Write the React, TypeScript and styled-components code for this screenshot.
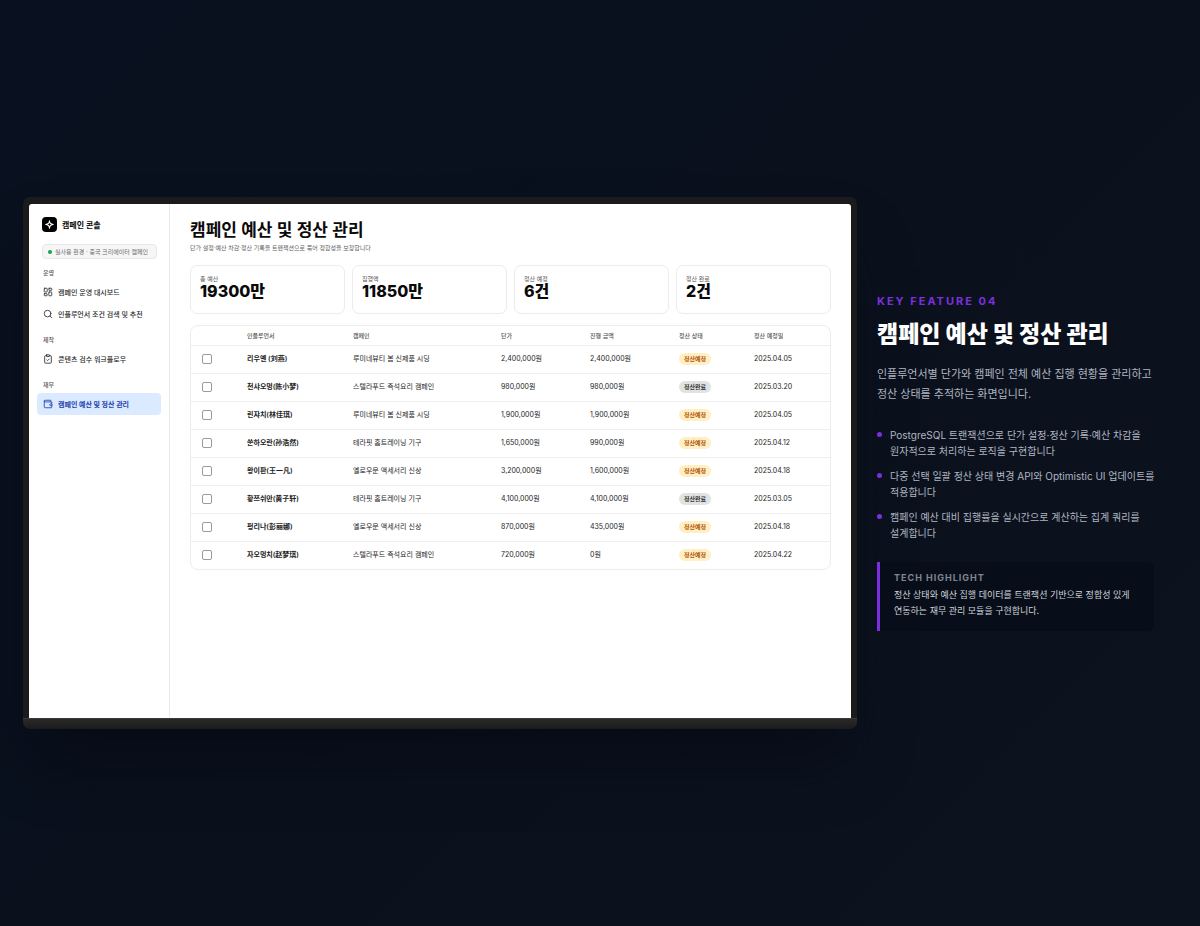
import React from "react";
import styled, { createGlobalStyle } from "styled-components";
import { LayoutDashboard, Search, ClipboardCheck, Wallet, type LucideIcon } from "lucide-react";

const GlobalStyle = createGlobalStyle`
  *, *::before, *::after { box-sizing: border-box; }
  body {
    margin: 0;
    background: #0b111e;
    font-family: Inter, "Noto Sans CJK KR", "Noto Sans CJK SC", sans-serif;
  }
  h1, h2, p, ul, dl, dd { margin: 0; padding: 0; }
`;

const Page = styled.div`
  min-height: 100vh;
  display: grid;
  grid-template-columns: minmax(0, 834fr) minmax(0, 277fr);
  gap: 20px;
  align-items: center;
  padding: 0 46px 0 23px;
  background: linear-gradient(135deg, #09101f 0%, #0a111d 50%, #0c131f 100%);
`;

const Device = styled.div`
  border-radius: 7px;
  box-shadow: 0 40px 60px -10px rgba(0, 2, 12, 0.4);
`;

const Bezel = styled.div`
  padding: 7px 6px 0;
  border-radius: 7px 7px 0 0;
  background: #1b1b1b;
`;

const Base = styled.div`
  height: 11px;
  border-top: 1px solid #3a3a3a;
  border-radius: 0 0 7px 7px;
  background: linear-gradient(#2a2a2a, #1b1b1b);
`;

const Screen = styled.div`
  display: flex;
  aspect-ratio: 16 / 10;
  overflow: hidden;
  border-radius: 3px 3px 0 0;
  background: #fff;
  color: #0a0a0a;
`;

const Sidebar = styled.aside`
  flex: 0 0 141px;
  padding: 13px 8px;
  border-right: 1px solid #ebebeb;
`;

const Brand = styled.div`
  display: flex;
  align-items: center;
  gap: 5px;
  padding: 0 5px;
  font-size: 8px;
  line-height: 14px;
  font-weight: 700;
`;

const Logo = styled.span`
  display: grid;
  place-items: center;
  width: 15px;
  height: 15px;
  border-radius: 4px;
  background: #000;
`;

const EnvPill = styled.p`
  && { margin: 12px 4px 8px 5px; padding: 0 5px; }
  display: flex;
  align-items: center;
  gap: 3px;
  height: 15px;
  border: 1px solid #e8e8e8;
  border-radius: 4px;
  background: #f6f6f6;
  color: #6b6b6b;
  font-size: 6px;
  white-space: nowrap;
`;

const LiveDot = styled.i`
  width: 4px;
  height: 4px;
  border-radius: 50%;
  background: #16a34a;
`;

const NavGroup = styled.section`
  margin-bottom: 9px;
`;

const NavTitle = styled.h2`
  && { margin-bottom: 2px; padding: 0 6px; }
  color: #555;
  font-size: 6px;
  line-height: 12px;
  font-weight: 500;
`;

const NavLink = styled.a<{ $active?: boolean }>`
  display: flex;
  align-items: center;
  gap: 5px;
  height: 22px;
  padding: 0 6px;
  border-radius: 4px;
  font-size: 7px;
  font-weight: ${(p) => (p.$active ? 700 : 500)};
  color: ${(p) => (p.$active ? "#1e40af" : "#2b2b2b")};
  background: ${(p) => (p.$active ? "#dbeafe" : "transparent")};
  text-decoration: none;
  white-space: nowrap;
`;

const Main = styled.main`
  flex: 1;
  min-width: 0;
  padding: 15px 20px;
`;

const ScreenTitle = styled.h1`
  font-size: 17px;
  line-height: 22px;
  font-weight: 600;
`;

const Subtitle = styled.p`
  color: #5c5c5c;
  font-size: 6px;
  line-height: 14px;
`;

const Stats = styled.dl`
  display: grid;
  grid-template-columns: repeat(4, 1fr);
  gap: 7px;
  && { padding: 10px 0 11px; }
`;

const Stat = styled.div`
  height: 49px;
  padding: 8px 9px;
  border: 1px solid #ececec;
  border-radius: 7px;
`;

const StatLabel = styled.dt`
  color: #555;
  font-size: 6px;
  line-height: 9px;
`;

const StatValue = styled.dd`
  font-size: 16px;
  line-height: 17px;
  font-weight: 800;
`;

const TableCard = styled.div`
  overflow: hidden;
  border: 1px solid #ececec;
  border-radius: 8px;
`;

const Table = styled.table`
  width: 100%;
  table-layout: fixed;
  border-collapse: collapse;
  font-size: 7px;
  white-space: nowrap;
`;

const HeadCell = styled.th<{ $width?: number }>`
  width: ${(p) => (p.$width ? `${p.$width}px` : "auto")};
  height: 19px;
  padding: 0 8px;
  color: #555;
  font-size: 6px;
  font-weight: 500;
  text-align: left;
`;

const Row = styled.tr`
  height: 28px;
  border-top: 1px solid #efefef;
`;

const Cell = styled.td<{ $strong?: boolean }>`
  padding: 0 8px;
  color: #1c1c1c;
  font-weight: ${(p) => (p.$strong ? 600 : 400)};
  line-height: 12px;
  vertical-align: middle;
`;

const CheckCell = styled(Cell)`
  padding: 0 11px;
`;

const Check = styled.input`
  appearance: none;
  display: block;
  width: 10px;
  height: 10px;
  margin: 0;
  border: 1px solid #9a9a9a;
  border-radius: 2px;
  background: #fff;

  &:checked { background: #1e40af; }
`;

const Badge = styled.span<{ $done: boolean }>`
  display: block;
  width: max-content;
  padding: 0 5px;
  border-radius: 6px;
  font-size: 6px;
  line-height: 12px;
  font-weight: 600;
  color: ${(p) => (p.$done ? "#333" : "#b45309")};
  background: ${(p) => (p.$done ? "#e2e2e2" : "#fef0c3")};
`;

const Story = styled.article`
  color: #b0b5c0;
  white-space: nowrap;
`;

const Eyebrow = styled.p`
  color: #7c2fdf;
  font-size: 11px;
  line-height: 12px;
  font-weight: 700;
  letter-spacing: 2px;
`;

const StoryTitle = styled.h2`
  && { margin: 12px 0 15px; }
  color: #fff;
  font-size: 23px;
  line-height: 30px;
  font-weight: 800;
`;

const Lead = styled.p`
  font-size: 11px;
  line-height: 20px;
`;

const Points = styled.ul`
  && { margin: 23px 0 21px; }
  display: grid;
  gap: 9px;
  list-style: none;
  font-size: 10px;
  line-height: 16px;
`;

const Point = styled.li`
  display: flex;
  gap: 8px;

  &::before {
    content: "";
    flex: none;
    width: 5px;
    height: 5px;
    margin-top: 5px;
    border-radius: 50%;
    background: #7c2fdf;
  }
`;

const Highlight = styled.section`
  padding: 10px 14px 12px;
  border-left: 3px solid #7c2fdf;
  border-radius: 0 6px 6px 0;
  background: #080e19;
`;

const HighlightTitle = styled.h2`
  && { margin-bottom: 3px; }
  color: #80858f;
  font-size: 9px;
  line-height: 12px;
  font-weight: 700;
  letter-spacing: 1px;
`;

const HighlightText = styled.p`
  color: #ced2da;
  font-size: 9px;
  line-height: 16px;
`;

type NavItem = { label: string; Icon: LucideIcon; active?: boolean };

const nav: { title: string; items: NavItem[] }[] = [
  {
    title: "운영",
    items: [
      { label: "캠페인 운영 대시보드", Icon: LayoutDashboard },
      { label: "인플루언서 조건 검색 및 추천", Icon: Search },
    ],
  },
  { title: "제작", items: [{ label: "콘텐츠 검수 워크플로우", Icon: ClipboardCheck }] },
  { title: "재무", items: [{ label: "캠페인 예산 및 정산 관리", Icon: Wallet, active: true }] },
];

const stats = [
  ["총 예산", "19300만"],
  ["집행액", "11850만"],
  ["정산 예정", "6건"],
  ["정산 완료", "2건"],
];

const columns: [string, number?][] = [
  ["인플루언서", 106],
  ["캠페인", 148],
  ["단가", 89],
  ["진행 금액", 89],
  ["정산 상태", 75],
  ["정산 예정일"],
];

const rows = [
  ["리우옌 (刘燕)", "루미네뷰티 봄 신제품 시딩", "2,400,000원", "2,400,000원", "정산예정", "2025.04.05"],
  ["천샤오멍(陈小梦)", "스텔라푸드 즉석요리 캠페인", "980,000원", "980,000원", "정산완료", "2025.03.20"],
  ["린쟈치(林佳琪)", "루미네뷰티 봄 신제품 시딩", "1,900,000원", "1,900,000원", "정산예정", "2025.04.05"],
  ["쑨하오란(孙浩然)", "테라핏 홈트레이닝 기구", "1,650,000원", "990,000원", "정산예정", "2025.04.12"],
  ["왕이판(王一凡)", "옐로우문 액세서리 신상", "3,200,000원", "1,600,000원", "정산예정", "2025.04.18"],
  ["황쯔쉬안(黄子轩)", "테라핏 홈트레이닝 기구", "4,100,000원", "4,100,000원", "정산완료", "2025.03.05"],
  ["펑리나(彭丽娜)", "옐로우문 액세서리 신상", "870,000원", "435,000원", "정산예정", "2025.04.18"],
  ["자오멍치(赵梦琪)", "스텔라푸드 즉석요리 캠페인", "720,000원", "0원", "정산예정", "2025.04.22"],
];

const points = [
  ["PostgreSQL 트랜잭션으로 단가 설정·정산 기록·예산 차감을", "원자적으로 처리하는 로직을 구현합니다"],
  ["다중 선택 일괄 정산 상태 변경 API와 Optimistic UI 업데이트를", "적용합니다"],
  ["캠페인 예산 대비 집행률을 실시간으로 계산하는 집계 쿼리를", "설계합니다"],
];

export default function App() {
  return (
    <>
      <GlobalStyle />
      <Page>
        <Device>
          <Bezel>
            <Screen>
              <Sidebar>
                <Brand>
                  <Logo>
                    <svg width="9" height="9" viewBox="0 0 24 24" fill="none" stroke="#fff" strokeWidth="3" strokeLinejoin="round">
                      <path d="M12 2C12.500 7 14 9 15 9.500C17 11 19 11.700 22 12C19 12.300 17 13 15 14.500C14 15.500 12.500 17 12 22C11.500 17 10 15.500 9 14.500C7 13 5 12.300 2 12C5 11.700 7 11 9 9.500C10 9 11.500 7 12 2Z" />
                    </svg>
                  </Logo>
                  캠페인 콘솔
                </Brand>
                <EnvPill>
                  <LiveDot />
                  실사용 환경 · 중국 크리에이터 캠페인
                </EnvPill>
                <nav>
                  {nav.map((group) => (
                    <NavGroup key={group.title}>
                      <NavTitle>{group.title}</NavTitle>
                      {group.items.map(({ label, Icon, active }) => (
                        <NavLink key={label} href="#" $active={active}>
                          <Icon size={10} strokeWidth={2} />
                          {label}
                        </NavLink>
                      ))}
                    </NavGroup>
                  ))}
                </nav>
              </Sidebar>
              <Main>
                <ScreenTitle>캠페인 예산 및 정산 관리</ScreenTitle>
                <Subtitle>단가 설정·예산 차감·정산 기록을 트랜잭션으로 묶어 정합성을 보장합니다</Subtitle>
                <Stats>
                  {stats.map(([label, value]) => (
                    <Stat key={label}>
                      <StatLabel>{label}</StatLabel>
                      <StatValue>{value}</StatValue>
                    </Stat>
                  ))}
                </Stats>
                <TableCard>
                  <Table>
                    <thead>
                      <tr>
                        <HeadCell $width={48} aria-label="선택" />
                        {columns.map(([label, width]) => (
                          <HeadCell key={label} $width={width}>{label}</HeadCell>
                        ))}
                      </tr>
                    </thead>
                    <tbody>
                      {rows.map(([name, campaign, price, spent, status, date]) => (
                        <Row key={name}>
                          <CheckCell>
                            <Check type="checkbox" aria-label={name} />
                          </CheckCell>
                          <Cell $strong>{name}</Cell>
                          <Cell>{campaign}</Cell>
                          <Cell>{price}</Cell>
                          <Cell>{spent}</Cell>
                          <Cell>
                            <Badge $done={status === "정산완료"}>{status}</Badge>
                          </Cell>
                          <Cell>{date}</Cell>
                        </Row>
                      ))}
                    </tbody>
                  </Table>
                </TableCard>
              </Main>
            </Screen>
          </Bezel>
          <Base />
        </Device>
        <Story>
          <Eyebrow>KEY FEATURE 04</Eyebrow>
          <StoryTitle>캠페인 예산 및 정산 관리</StoryTitle>
          <Lead>
            인플루언서별 단가와 캠페인 전체 예산 집행 현황을 관리하고
            <br />
            정산 상태를 추적하는 화면입니다.
          </Lead>
          <Points>
            {points.map(([first, second]) => (
              <Point key={first}>
                <span>
                  {first}
                  <br />
                  {second}
                </span>
              </Point>
            ))}
          </Points>
          <Highlight>
            <HighlightTitle>TECH HIGHLIGHT</HighlightTitle>
            <HighlightText>
              정산 상태와 예산 집행 데이터를 트랜잭션 기반으로 정합성 있게
              <br />
              연동하는 재무 관리 모듈을 구현합니다.
            </HighlightText>
          </Highlight>
        </Story>
      </Page>
    </>
  );
}
